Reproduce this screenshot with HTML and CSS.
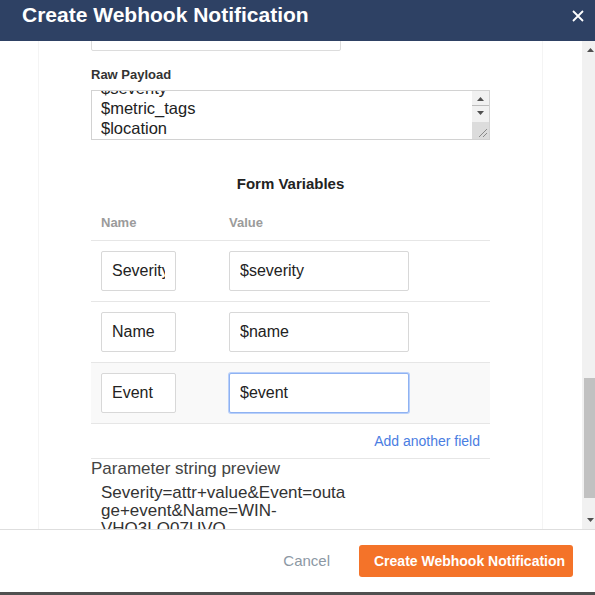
FILE: index.html
```html
<!DOCTYPE html>
<html lang="en">
<head>
<meta charset="utf-8">
<title>Create Webhook Notification</title>
<link rel="stylesheet" href="styles.css">
</head>
<body>
<div class="modal">
  <header class="modal-header">
    <h1 class="modal-title">Create Webhook Notification</h1>
    <span class="close" aria-label="Close">
      <svg width="12" height="12" viewBox="0 0 12 12"><path d="M1 1 L11 11 M11 1 L1 11" stroke="#fff" stroke-width="1.8" fill="none"/></svg>
    </span>
  </header>
  <div class="modal-body">
    <div class="scroll-area">
      <div class="panel">
        <div class="form">
          <div class="field-stub"></div>
          <div class="label">Raw Payload</div>
          <div class="textarea">
            <div class="textarea-content">
              <div class="textarea-lines">$severity<br>$metric_tags<br>$location</div>
            </div>
            <div class="ta-scrollbar">
              <div class="ta-btn ta-up"><svg width="17" height="15" viewBox="0 0 17 15"><polygon points="5,10 8.5,6 12,10" fill="#505050"/></svg></div>
              <div class="ta-btn ta-down"><svg width="17" height="15" viewBox="0 0 17 15"><polygon points="5,5 12,5 8.5,9" fill="#505050"/></svg></div>
              <div class="ta-corner"><svg width="17" height="17" viewBox="0 0 17 17"><path d="M7 15 L15 7 M11 15 L15 11" stroke="#8a8a8a" stroke-width="1" fill="none"/></svg></div>
            </div>
          </div>
          <h2 class="section-title">Form Variables</h2>
          <div class="vars">
            <div class="vars-head"><span>Name</span><span>Value</span></div>
            <div class="vars-row">
              <input class="inp inp-name" value="Severity">
              <input class="inp inp-value" value="$severity">
            </div>
            <div class="vars-row">
              <input class="inp inp-name" value="Name">
              <input class="inp inp-value" value="$name">
            </div>
            <div class="vars-row vars-row-active">
              <input class="inp inp-name" value="Event">
              <input class="inp inp-value inp-focus" value="$event">
            </div>
          </div>
          <div class="add-row"><a class="add-link">Add another field</a></div>
          <div class="preview-label">Parameter string preview</div>
          <div class="preview-text">Severity=attr+value&amp;Event=outa<br>ge+event&amp;Name=WIN-<br>VHO3LQ07UVO</div>
        </div>
      </div>
    </div>
    <div class="scrollbar">
      <div class="sb-btn"><svg width="13" height="17" viewBox="0 0 13 17"><polygon points="5,11 8.5,7 12,11" fill="#505050"/></svg></div>
      <div class="sb-track"><div class="sb-thumb"></div></div>
      <div class="sb-btn"><svg width="13" height="17" viewBox="0 0 13 17"><polygon points="5,6 12,6 8.5,10" fill="#505050"/></svg></div>
    </div>
  </div>
  <footer class="modal-footer">
    <span class="cancel">Cancel</span>
    <span class="primary">Create Webhook Notification</span>
  </footer>
</div>
<div class="backdrop"></div>
</body>
</html>
```
FILE: styles.css
```css
html, body {
  margin: 0;
  padding: 0;
}
body {
  font-family: "Liberation Sans", Arial, sans-serif;
  background: #fff;
  overflow: hidden;
  width: 595px;
  height: 595px;
}
.modal {
  width: 595px;
  height: 592px;
  display: flex;
  flex-direction: column;
  background: #fff;
}
.modal-header {
  height: 41px;
  flex: none;
  box-sizing: border-box;
  background: #2e4164;
  display: flex;
  justify-content: space-between;
  align-items: flex-start;
  padding: 3px 11px 0 22px;
}
.modal-title {
  margin: 0;
  font-size: 21px;
  line-height: 24px;
  font-weight: bold;
  color: #fff;
}
.close {
  display: block;
  width: 12px;
  height: 12px;
  margin-top: 7px;
}
.close svg {
  display: block;
}
.modal-body {
  height: 488px;
  flex: none;
  display: flex;
  overflow: hidden;
}
.scroll-area {
  flex: 1;
  overflow: hidden;
}
.panel {
  margin-left: 38px;
  width: 505px;
  height: 488px;
  box-sizing: border-box;
  border-left: 1px solid #f4f4f4;
  border-right: 1px solid #f4f4f4;
  overflow: hidden;
}
.form {
  width: 399px;
  margin: 0 auto;
}
.field-stub {
  width: 250px;
  height: 40px;
  box-sizing: border-box;
  border: 1px solid #dcdcdc;
  border-radius: 2px;
  margin-top: -30px;
}
.label {
  margin-top: 16px;
  font-size: 13px;
  line-height: 15px;
  font-weight: bold;
  color: #333;
}
.textarea {
  margin-top: 8px;
  height: 50px;
  box-sizing: border-box;
  border: 1px solid #d2d2d2;
  display: flex;
  color: #222;
}
.textarea-content {
  flex: 1;
  overflow: hidden;
}
.textarea-lines {
  margin-top: -13px;
  padding-left: 9px;
  font-size: 16.5px;
  line-height: 20px;
}
.ta-scrollbar {
  width: 17px;
  flex: none;
  background: #f1f1f1;
  display: flex;
  flex-direction: column;
}
.ta-btn {
  height: 15px;
}
.ta-up {
  border-bottom: 1px solid #bdbdbd;
  height: 14px;
}
.ta-btn svg, .ta-corner svg, .sb-btn svg {
  display: block;
}
.ta-corner {
  margin-top: auto;
  height: 17px;
  background: #dcdcdc;
}
.section-title {
  margin: 35px 0 0;
  text-align: center;
  font-size: 15px;
  line-height: 18px;
  font-weight: bold;
  color: #222;
}
.vars-head {
  display: grid;
  grid-template-columns: 128px 1fr;
  padding: 22px 10px 10px;
  font-size: 13px;
  line-height: 15px;
  font-weight: bold;
  color: #9b9b9b;
  border-bottom: 1px solid #e6e6e6;
}
.vars-row {
  display: grid;
  grid-template-columns: 128px 1fr;
  padding: 10px;
  border-bottom: 1px solid #e6e6e6;
}
.vars-row-active {
  background: #f9f9f9;
}
.inp {
  height: 40px;
  box-sizing: border-box;
  border: 1px solid #d8d8d8;
  border-radius: 2px;
  padding: 0 10px;
  font-family: "Liberation Sans", Arial, sans-serif;
  font-size: 16px;
  color: #222;
  background: #fff;
  outline: none;
  margin: 0;
}
.inp-name {
  width: 75px;
}
.inp-value {
  width: 180px;
}
.inp-focus {
  border-color: #8fb2f2;
  box-shadow: 0 0 0 1px #b9d0fa;
}
.add-row {
  height: 35px;
  box-sizing: border-box;
  border-bottom: 1px solid #e6e6e6;
  text-align: right;
  padding-right: 10px;
  font-size: 14px;
  line-height: 35px;
}
.add-link {
  color: #4a7de2;
  text-decoration: none;
}
.preview-label {
  font-size: 17px;
  line-height: 20px;
  color: #444;
}
.preview-text {
  margin-top: 5px;
  padding-left: 10px;
  font-size: 17px;
  line-height: 18px;
  color: #333;
  white-space: nowrap;
}
.scrollbar {
  width: 13px;
  flex: none;
  background: #f1f1f1;
  display: flex;
  flex-direction: column;
}
.sb-btn {
  height: 17px;
  flex: none;
}
.sb-track {
  flex: 1;
}
.sb-thumb {
  margin-top: 320px;
  margin-left: 2px;
  width: 11px;
  height: 120px;
  background: #c1c1c1;
}
.modal-footer {
  height: 63px;
  flex: none;
  box-sizing: border-box;
  border-top: 1px solid #dedede;
  display: flex;
  justify-content: flex-end;
  align-items: center;
  padding-right: 22px;
  padding-bottom: 1px;
  gap: 29px;
}
.cancel {
  font-size: 15px;
  color: #8c98a4;
  white-space: nowrap;
}
.primary {
  flex: none;
  white-space: nowrap;
  height: 32px;
  box-sizing: border-box;
  padding: 0 15px;
  background: #f47329;
  border-radius: 3px;
  color: #fff;
  font-size: 14px;
  font-weight: bold;
  line-height: 32px;
  width: 214px;
  text-align: center;
}
.backdrop {
  height: 3px;
  background: #505050;
}
```
